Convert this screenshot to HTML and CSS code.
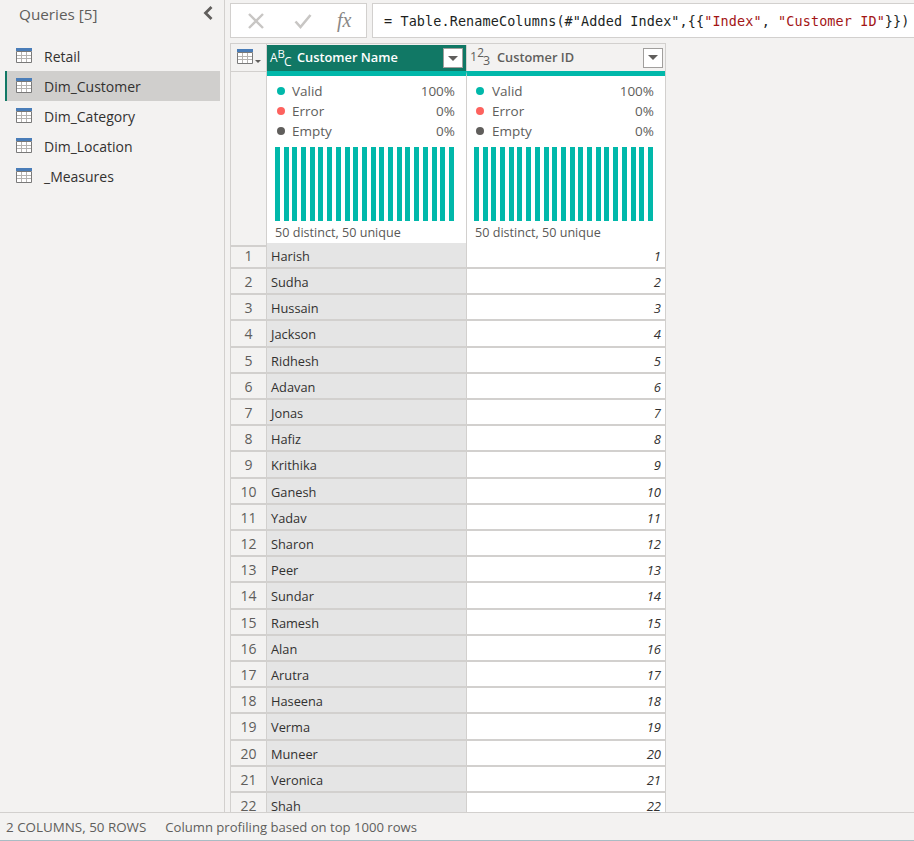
FILE: index.html
```html
<!DOCTYPE html>
<html lang="en">
<head>
    <meta charset="UTF-8">
    <title>Power Query Editor</title>
    <link rel="stylesheet" href="styles.css">
</head>
<body>
    <div id="content">
        <aside id="queries">
            <header id="queries-head">
                <span id="queries-title">Queries [5]</span>
                <svg class="collapse" width="10" height="14" viewBox="0 0 10 14"><path d="M8.5 1 2.5 7 8.5 13" fill="none" stroke="#605e5c" stroke-width="2.8"/></svg>
            </header>
            <ul id="query-list">
                <li class="query"><svg class="tbl" width="16" height="15" viewBox="0 0 16 15"><use href="#table-icon"/></svg>Retail</li>
                <li class="query active"><svg class="tbl" width="16" height="15" viewBox="0 0 16 15"><use href="#table-icon"/></svg>Dim_Customer</li>
                <li class="query"><svg class="tbl" width="16" height="15" viewBox="0 0 16 15"><use href="#table-icon"/></svg>Dim_Category</li>
                <li class="query"><svg class="tbl" width="16" height="15" viewBox="0 0 16 15"><use href="#table-icon"/></svg>Dim_Location</li>
                <li class="query"><svg class="tbl" width="16" height="15" viewBox="0 0 16 15"><use href="#table-icon"/></svg>_Measures</li>
            </ul>
        </aside>

        <main id="editor">
            <div id="formula-row">
                <div id="formula-tools">
                    <svg width="18" height="18" viewBox="0 0 18 18"><path d="M2 2 16 16M16 2 2 16" stroke="#c8c6c4" stroke-width="2.4" fill="none"/></svg>
                    <svg width="18" height="18" viewBox="0 0 18 18"><path d="M1.5 9.5 6.5 15 16.5 3" stroke="#c8c6c4" stroke-width="2.6" fill="none"/></svg>
                    <span id="fx">fx</span>
                </div>
                <div id="formula-bar">= Table.RenameColumns(#"Added Index",{{<span class="str">"Index"</span>, <span class="str">"Customer ID"</span>}})</div>
            </div>

            <div id="grid">
                <div class="head-row">
                    <div class="corner">
                        <svg width="26" height="18" viewBox="0 0 26 18"><use href="#table-icon"/><path d="M18 11h6l-3 3z" fill="#605e5c"/></svg>
                    </div>
                    <div class="col-head selected">
                        <span class="type-abc">A<sup>B</sup><sub>C</sub></span>
                        <span class="col-name">Customer Name</span>
                        <span class="drop"><i></i></span>
                    </div>
                    <div class="col-head">
                        <span class="type-123">1<sup>2</sup><sub>3</sub></span>
                        <span class="col-name">Customer ID</span>
                        <span class="drop"><i></i></span>
                    </div>
                </div>

                <div class="profile-row">
                    <div class="corner-fill"></div>
                    <div class="profile">
                        <div class="quality"><i class="dot valid"></i><span>Valid</span><b>100%</b></div>
                        <div class="quality"><i class="dot error"></i><span>Error</span><b>0%</b></div>
                        <div class="quality"><i class="dot empty"></i><span>Empty</span><b>0%</b></div>
                        <div class="bars"></div>
                        <div class="distinct">50 distinct, 50 unique</div>
                    </div>
                    <div class="profile">
                        <div class="quality"><i class="dot valid"></i><span>Valid</span><b>100%</b></div>
                        <div class="quality"><i class="dot error"></i><span>Error</span><b>0%</b></div>
                        <div class="quality"><i class="dot empty"></i><span>Empty</span><b>0%</b></div>
                        <div class="bars"></div>
                        <div class="distinct">50 distinct, 50 unique</div>
                    </div>
                </div>

                <div class="row"><div class="num">1</div><div class="name">Harish</div><div class="id">1</div></div>
                <div class="row"><div class="num">2</div><div class="name">Sudha</div><div class="id">2</div></div>
                <div class="row"><div class="num">3</div><div class="name">Hussain</div><div class="id">3</div></div>
                <div class="row"><div class="num">4</div><div class="name">Jackson</div><div class="id">4</div></div>
                <div class="row"><div class="num">5</div><div class="name">Ridhesh</div><div class="id">5</div></div>
                <div class="row"><div class="num">6</div><div class="name">Adavan</div><div class="id">6</div></div>
                <div class="row"><div class="num">7</div><div class="name">Jonas</div><div class="id">7</div></div>
                <div class="row"><div class="num">8</div><div class="name">Hafiz</div><div class="id">8</div></div>
                <div class="row"><div class="num">9</div><div class="name">Krithika</div><div class="id">9</div></div>
                <div class="row"><div class="num">10</div><div class="name">Ganesh</div><div class="id">10</div></div>
                <div class="row"><div class="num">11</div><div class="name">Yadav</div><div class="id">11</div></div>
                <div class="row"><div class="num">12</div><div class="name">Sharon</div><div class="id">12</div></div>
                <div class="row"><div class="num">13</div><div class="name">Peer</div><div class="id">13</div></div>
                <div class="row"><div class="num">14</div><div class="name">Sundar</div><div class="id">14</div></div>
                <div class="row"><div class="num">15</div><div class="name">Ramesh</div><div class="id">15</div></div>
                <div class="row"><div class="num">16</div><div class="name">Alan</div><div class="id">16</div></div>
                <div class="row"><div class="num">17</div><div class="name">Arutra</div><div class="id">17</div></div>
                <div class="row"><div class="num">18</div><div class="name">Haseena</div><div class="id">18</div></div>
                <div class="row"><div class="num">19</div><div class="name">Verma</div><div class="id">19</div></div>
                <div class="row"><div class="num">20</div><div class="name">Muneer</div><div class="id">20</div></div>
                <div class="row"><div class="num">21</div><div class="name">Veronica</div><div class="id">21</div></div>
                <div class="row"><div class="num">22</div><div class="name">Shah</div><div class="id">22</div></div>
            </div>
        </main>
    </div>

    <footer id="status-bar">
        <span class="status-count">2 COLUMNS, 50 ROWS</span>
        <span class="status-note">Column profiling based on top 1000 rows</span>
    </footer>

    <svg width="0" height="0" class="defs">
        <symbol id="table-icon" viewBox="0 0 16 15" width="16" height="15">
            <path d="M.5 3.5h15v11H.5z" fill="#fff" stroke="#7a7a7a"/>
            <path d="M0 0h16v3H0z" fill="#4a7db8"/>
            <path d="M5.5 4v10M10.5 4v10M1 7.5h14M1 10.5h14" stroke="#b5b3b1"/>
        </symbol>
    </svg>
</body>
</html>
```

FILE: styles.css
```css
/* General Reset */
* {
    margin: 0;
    padding: 0;
    box-sizing: border-box;
}

body {
    font-family: "Open Sans", "Noto Sans", sans-serif;
    font-size: 13px;
    display: flex;
    flex-direction: column;
    height: 100vh;
    overflow: hidden;
    background-color: #f3f2f1;
    color: #323130;
}

.defs {
    position: absolute;
}

#content {
    flex: 1;
    display: flex;
    min-height: 0;
}

/* Queries Pane */
#queries {
    width: 225px;
    flex-shrink: 0;
    border-right: 1px solid #d2d0ce;
    padding: 0 4px 0 5px;
}

#queries-head {
    height: 41px;
    padding: 4px 7px 0 14px;
    display: flex;
    align-items: flex-start;
    justify-content: space-between;
}

#queries-title {
    font-size: 15.3px;
    line-height: 20px;
    color: #605e5c;
}

.collapse {
    margin-top: 2px;
}

#query-list {
    list-style: none;
}

.query {
    height: 30px;
    display: flex;
    align-items: center;
    gap: 12px;
    padding-left: 9px;
    font-size: 14px;
    border-left: 2px solid transparent;
}

.query.active {
    background-color: #d0cfcd;
    border-left-color: #117865;
}

.tbl {
    margin-top: -2px;
}

/* Formula Bar */
#editor {
    flex: 1;
    min-width: 0;
    padding: 3px 0 0 5px;
    display: flex;
    flex-direction: column;
}

#formula-row {
    display: flex;
    gap: 5px;
    height: 35px;
    margin-bottom: 5px;
}

#formula-tools {
    width: 137px;
    flex-shrink: 0;
    background-color: #fff;
    border: 1px solid #d2d0ce;
    display: flex;
    align-items: center;
    gap: 29px;
    padding-left: 16px;
}

#fx {
    font-family: "Liberation Serif", serif;
    font-style: italic;
    font-size: 20px;
    color: #8a8886;
    margin-left: -4px;
}

#formula-bar {
    flex: 1;
    min-width: 0;
    background-color: #fff;
    border: 1px solid #d2d0ce;
    border-right: 0;
    font-family: "DejaVu Sans Mono", monospace;
    font-size: 13.44px;
    letter-spacing: 0.12px;
    line-height: 35px;
    padding-left: 11px;
    white-space: nowrap;
    overflow: hidden;
    color: #201f1e;
}

.str {
    color: #a31515;
}

/* Data Grid */
#grid {
    width: 436px;
    flex: 1;
    min-height: 0;
    overflow: hidden;
    border-top: 1px solid #d2d0ce;
    border-right: 1px solid #d2d0ce;
    border-left: 1px solid #d2d0ce;
}

.head-row,
.profile-row,
.row {
    display: grid;
    grid-template-columns: 36px 200px 198px;
}

.head-row {
    height: 27px;
}

.corner {
    border-right: 1px solid #d2d0ce;
    border-bottom: 1px solid #d2d0ce;
    padding: 5px 0 0 6px;
}

.col-head {
    display: flex;
    align-items: center;
    background-color: #f3f2f1;
    color: #605e5c;
    border-bottom: 1px solid #d2d0ce;
    padding-left: 3px;
    font-weight: 600;
}

.col-head .drop {
    margin-right: 2px;
}

.col-head.selected {
    background-color: #117865;
    color: #fff;
    margin-top: 1px;
    border-right: 1px solid #d2d0ce;
}

.col-head.selected .drop {
    margin-right: 3px;
}

.col-name {
    font-size: 12.8px;
    flex: 1;
    margin-top: -2px;
}

.type-abc,
.type-123 {
    width: 27px;
    flex-shrink: 0;
    font-weight: 400;
    white-space: nowrap;
    line-height: 1;
}

.type-abc {
    font-size: 12px;
}

.type-123 {
    font-size: 12.5px;
}

.type-abc sup,
.type-123 sup {
    font-size: 0.95em;
    vertical-align: 4px;
    line-height: 0;
}

.type-abc sub,
.type-123 sub {
    font-size: 1em;
    vertical-align: -4px;
    line-height: 0;
    margin-left: -1px;
}

.drop {
    width: 20px;
    height: 20px;
    flex-shrink: 0;
    background-color: #fff;
    border: 1px solid #a19f9d;
    display: flex;
    align-items: center;
    justify-content: center;
}

.drop i {
    border-top: 5px solid #605e5c;
    border-left: 5px solid transparent;
    border-right: 5px solid transparent;
}

/* Column Profile */
.profile-row {
    height: 171.8px;
}

.corner-fill {
    border-right: 1px solid #d2d0ce;
    border-bottom: 2px solid #d2d0ce;
}

.profile {
    background-color: #fff;
    border-top: 5px solid #01b8aa;
    border-bottom: 2px solid #d2d0ce;
    padding: 5px 11px 0 8px;
    color: #605e5c;
}

.profile:nth-child(2) {
    border-right: 1px solid #d2d0ce;
    padding-left: 9px;
}

.profile:nth-child(3) .quality span {
    margin-left: 8px;
}

.quality {
    height: 20px;
    display: flex;
    align-items: center;
    font-size: 13.5px;
}

.quality span {
    flex: 1;
    margin-left: 7px;
}

.quality b {
    font-weight: 400;
}

.dot {
    width: 8px;
    height: 8px;
    margin-left: 1px;
    border-radius: 50%;
}

.dot.valid {
    background-color: #01b8aa;
}

.dot.error {
    background-color: #fd625e;
}

.dot.empty {
    background-color: #605e5c;
}

.bars {
    width: 179px;
    height: 74px;
    margin: 6px 0 0 -1px;
    background: repeating-linear-gradient(to right, #01b8aa 0, #01b8aa 5px, #fff 5px, #fff 8.7px);
}

.distinct {
    font-size: 12.6px;
    line-height: 24px;
    margin-left: -1px;
    color: #5a5856;
}

.profile:nth-child(3) .distinct {
    margin-left: 0;
}

/* Rows */
.row {
    height: 26.21px;
    grid-template-rows: 24.21px;
    border-bottom: 2px solid #d2d0ce;
}

.num {
    border-right: 1px solid #d2d0ce;
    text-align: center;
    font-size: 14px;
    color: #605e5c;
    line-height: 26px;
}

.name {
    background-color: #e5e5e5;
    border-right: 1px solid #d2d0ce;
    padding-left: 4px;
    line-height: 26px;
    font-size: 12.8px;
}

.id {
    background-color: #fff;
    text-align: right;
    padding-right: 4px;
    line-height: 26px;
    font-size: 13px;
    font-style: italic;
}

/* Status Bar */
#status-bar {
    height: 29px;
    flex-shrink: 0;
    border-top: 1px solid #d2d0ce;
    border-bottom: 1px solid #a9bcc4;
    display: flex;
    align-items: center;
    gap: 19px;
    padding-left: 6px;
    color: #605e5c;
}

.status-count {
    font-size: 13.4px;
}

.status-note {
    font-size: 13.1px;
}
```
